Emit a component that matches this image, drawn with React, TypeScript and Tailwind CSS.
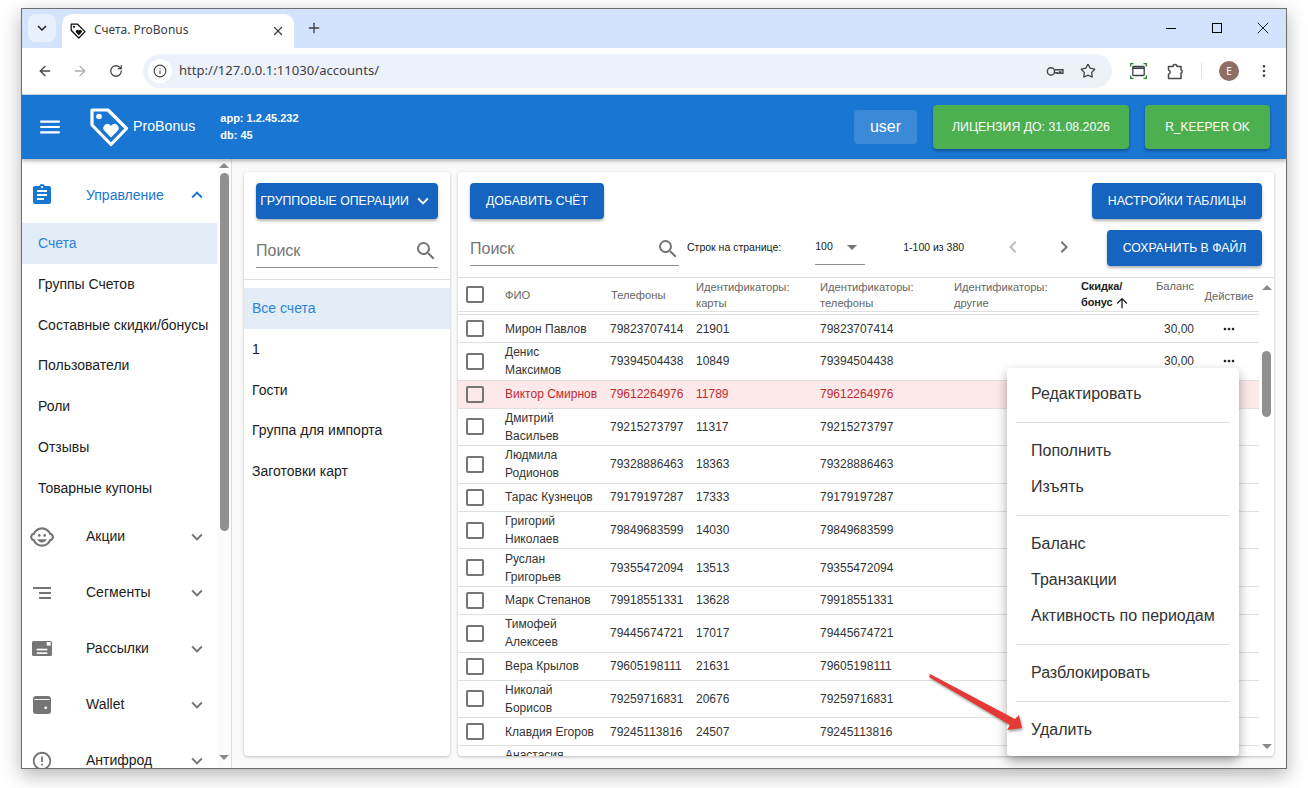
import { ArrowLeft, ArrowRight, Info, MoreVertical, Plus, RotateCw, Star, X } from "lucide-react";
import {
  MdArrowDropDown,
  MdArrowUpward,
  MdAssignment,
  MdChevronLeft,
  MdChevronRight,
  MdChildCare,
  MdErrorOutline,
  MdExpandLess,
  MdExpandMore,
  MdKeyboardArrowDown,
  MdMenu,
  MdMoreHoriz,
  MdSearch,
} from "react-icons/md";

const tableCols = "grid grid-cols-[47px_106px_85px_124px_134px_127px_63px_50px_65px]";

const subItems = ["Счета", "Группы Счетов", "Составные скидки/бонусы", "Пользователи", "Роли", "Отзывы", "Товарные купоны"];
const groups = ["Все счета", "1", "Гости", "Группа для импорта", "Заготовки карт"];

type Row = { name: string; phone: string; card: string; balance?: string; blocked?: boolean };

const rows: Row[] = [
  { name: "Мирон Павлов", phone: "79823707414", card: "21901", balance: "30,00" },
  { name: "Денис\nМаксимов", phone: "79394504438", card: "10849", balance: "30,00" },
  { name: "Виктор Смирнов", phone: "79612264976", card: "11789", blocked: true },
  { name: "Дмитрий\nВасильев", phone: "79215273797", card: "11317" },
  { name: "Людмила\nРодионов", phone: "79328886463", card: "18363" },
  { name: "Тарас Кузнецов", phone: "79179197287", card: "17333" },
  { name: "Григорий\nНиколаев", phone: "79849683599", card: "14030" },
  { name: "Руслан\nГригорьев", phone: "79355472094", card: "13513" },
  { name: "Марк Степанов", phone: "79918551331", card: "13628" },
  { name: "Тимофей\nАлексеев", phone: "79445674721", card: "17017" },
  { name: "Вера Крылов", phone: "79605198111", card: "21631" },
  { name: "Николай\nБорисов", phone: "79259716831", card: "20676" },
  { name: "Клавдия Егоров", phone: "79245113816", card: "24507" },
  { name: "Анастасия\nПетрова", phone: "79245113817", card: "24508" },
];

const menuGroups = [
  ["Редактировать"],
  ["Пополнить", "Изъять"],
  ["Баланс", "Транзакции", "Активность по периодам"],
  ["Разблокировать"],
  ["Удалить"],
];

function TagLogo({ className }: { className?: string }) {
  return (
    <svg viewBox="0 0 40 40" className={className} fill="none">
      <path d="M3 3 L19 3 L37.5 21.5 L22 37.5 L3 18 Z" stroke="currentColor" strokeWidth="3.2" strokeLinejoin="round" />
      <circle cx="10" cy="9.5" r="2.8" fill="currentColor" />
      <path d="M22 30.5 L15.6 24.1 a4.1 4.1 0 0 1 5.8-5.8 L22 19 l.6-.7 a4.1 4.1 0 0 1 5.8 5.8 Z" fill="currentColor" />
    </svg>
  );
}

function MailIcon({ className }: { className?: string }) {
  return (
    <svg viewBox="0 0 20 15" className={className} fill="currentColor">
      <rect width="20" height="15" rx="1.5" />
      <rect x="14.7" y="1" width="4" height="3.6" fill="#fff" />
      <rect x="4.7" y="7.7" width="10.7" height="1.7" fill="#fff" />
      <rect x="4.7" y="11.3" width="10.7" height="1.6" fill="#fff" />
    </svg>
  );
}

function WalletIcon({ className }: { className?: string }) {
  return (
    <svg viewBox="0 0 18 18" className={className} fill="currentColor">
      <rect width="18" height="18" rx="3" />
      <rect x="1.4" y="3.1" width="15.2" height="0.9" fill="#fff" />
      <circle cx="12.7" cy="11.8" r="1.4" fill="#fff" />
    </svg>
  );
}

function SegmentsIcon({ className }: { className?: string }) {
  return (
    <svg viewBox="0 0 18 12" className={className} fill="currentColor">
      <rect x="0" y="0" width="18" height="2" />
      <rect x="6" y="5" width="12" height="2" />
      <rect x="6" y="10" width="12" height="2" />
    </svg>
  );
}

function KeyIcon({ className }: { className?: string }) {
  return (
    <svg viewBox="0 0 20 12" className={className} fill="none" stroke="currentColor" strokeWidth="1.6">
      <circle cx="5.5" cy="6" r="4" />
      <path d="M9.5 4.2h9.3v4h-2.2V6.6h-1.8v1.6h-2.4V7.6H9.5" />
    </svg>
  );
}

function CaptureIcon({ className }: { className?: string }) {
  return (
    <svg viewBox="0 0 17 16" className={className} fill="none" strokeWidth="1.3">
      <path d="M.7 3.5V.7h2.8M13.5.7h2.8v2.8M.7 12.5v2.8h2.8M13.5 15.3h2.8v-2.8" stroke="#2e7d32" />
      <rect x="2.8" y="3.5" width="11.4" height="9" rx="0.8" stroke="#3c4043" />
      <path d="M2.8 5.2h11.4" stroke="#3c4043" strokeWidth="1.6" />
    </svg>
  );
}

function PuzzleIcon({ className }: { className?: string }) {
  return (
    <svg viewBox="0 0 17 17" className={className} fill="none" stroke="currentColor" strokeWidth="1.5" strokeLinejoin="round">
      <path d="M1.5 3.5H6a2 2 0 0 1 4 0h4v3.4a1.7 1.7 0 0 1 0 3.2v5.4H1.5v-4.3a2.1 2.1 0 0 0 0-4.1z" />
    </svg>
  );
}

function Checkbox() {
  return <span className="block h-[17px] w-[18px] rounded-[2px] border-2 border-[#757575]" />;
}

function ScrollArrow({ down }: { down?: boolean }) {
  return (
    <span
      className={
        down
          ? "block h-0 w-0 border-x-[5px] border-t-[5px] border-x-transparent border-t-[#8a8a8a]"
          : "block h-0 w-0 border-x-[5px] border-b-[5px] border-x-transparent border-b-[#8a8a8a]"
      }
    />
  );
}

function PrimaryButton({ label, className }: { label: string; className?: string }) {
  return (
    <button className={`flex h-9 items-center justify-center whitespace-nowrap rounded bg-[#1565c0] text-[12.25px] font-medium text-white shadow-[0_2px_3px_rgba(0,0,0,0.3)] ${className ?? ""}`}>
      {label}
    </button>
  );
}

function NavGroup({ icon, label }: { icon: React.ReactNode; label: string }) {
  return (
    <div className="flex h-14 shrink-0 items-center text-[#757575]">
      <div className="flex w-10 justify-center">{icon}</div>
      <span className="mb-[1px] ml-[24px] flex-1 text-sm text-[#212121]">{label}</span>
      <MdExpandMore className="mr-[9px] text-[22px]" />
    </div>
  );
}

export default function App() {
  return (
    <div className="h-[788px] w-[1308px] overflow-hidden bg-white pl-[21px] pt-2 font-['Liberation_Sans',Arial,sans-serif]">
      <div className="flex h-[761px] w-[1266px] flex-col overflow-hidden border border-[#6e6e6e] shadow-[0_6px_18px_rgba(0,0,0,0.3)]">
        {/* browser tabs */}
        <div className="flex h-[39px] shrink-0 items-end bg-[#d3e3fd] font-['Noto_Sans',sans-serif]">
          <div className="mb-[6px] ml-[6px] flex h-7 w-7 items-center justify-center rounded-lg bg-[#e8f0fe]">
            <MdKeyboardArrowDown className="text-lg text-[#1f1f1f]" />
          </div>
          <div className="ml-[6px] flex h-[34px] w-[232px] items-center rounded-t-[10px] bg-white pl-2 pr-2">
            <TagLogo className="h-4 w-4 text-[#111]" />
            <span className="mb-[2px] ml-[8px] flex-1 text-xs text-[#3c4043]">Счета. ProBonus</span>
            <X size={14} strokeWidth={2.2} className="mb-[1px] mr-[1px] text-[#3c4043]" />
          </div>
          <div className="mb-[6px] ml-[6px] flex h-7 w-7 items-center justify-center">
            <Plus size={16} strokeWidth={2} className="text-[#3c4043]" />
          </div>
          <div className="mb-[10px] ml-auto flex items-center pr-[13px] text-[#111]">
            <span className="block h-px w-[10px] bg-black" />
            <span className="ml-[36px] block h-[10px] w-[10px] border border-black" />
            <X size={20} strokeWidth={1.1} className="ml-[31px]" />
          </div>
        </div>

        {/* browser toolbar */}
        <div className="flex h-[47px] shrink-0 items-center border-b border-[#d5dbe5] bg-white font-['Noto_Sans',sans-serif] text-[#474747]">
          <ArrowLeft size={16} className="ml-[15px]" />
          <ArrowRight size={16} className="ml-[19px] text-[#b0b0b0]" />
          <RotateCw size={14} strokeWidth={2.2} className="ml-[21px]" />
          <div className="ml-[20px] flex h-[34px] w-[969px] items-center rounded-full bg-[#edf2fa] pl-[5px] pr-[16px]">
            <span className="flex h-6 w-6 items-center justify-center rounded-full bg-white">
              <Info size={14} strokeWidth={2} />
            </span>
            <span className="ml-[7px] flex-1 text-[13.1px] text-[#3c4043]">http://127.0.0.1:11030/accounts/</span>
            <KeyIcon className="mr-[16px] w-[18px] text-[#474747]" />
            <Star size={16} strokeWidth={2} />
          </div>
          <CaptureIcon className="ml-[18px] w-[17px]" />
          <PuzzleIcon className="ml-[20px] w-[17px]" />
          <span className="ml-[17px] h-[16px] w-px bg-[#d3e3fd]" />
          <span className="ml-[17px] flex h-5 w-5 items-center justify-center rounded-full bg-[#8d6e63] text-[10px] text-white">E</span>
          <MoreVertical size={16} className="ml-[17px]" />
        </div>

        {/* app header */}
        <header className="relative z-10 flex h-16 shrink-0 items-center bg-[#1976d2] text-white shadow-[0_2px_4px_rgba(0,0,0,0.3)]">
          <MdMenu className="ml-[15px] text-[26px]" />
          <TagLogo className="ml-[26px] h-10 w-10" />
          <span className="ml-1 text-[14.2px]">ProBonus</span>
          <div className="ml-[25px] text-[11px] font-bold leading-[17px]">
            <div>app: 1.2.45.232</div>
            <div>db: 45</div>
          </div>
          <div className="ml-auto flex items-center pr-4">
            <span className="flex h-[34px] w-[63px] items-center justify-center rounded bg-white/15 text-base font-medium">user</span>
            <button className="ml-4 h-11 w-[196px] rounded bg-[#4caf50] text-[12.3px] font-medium shadow-[0_2px_3px_rgba(0,0,0,0.3)]">ЛИЦЕНЗИЯ ДО: 31.08.2026</button>
            <button className="ml-4 h-11 w-[125px] rounded bg-[#4caf50] text-xs font-medium shadow-[0_2px_3px_rgba(0,0,0,0.3)]">R_KEEPER OK</button>
          </div>
        </header>

        <div className="flex min-h-0 flex-1 bg-[#fafafa]">
          {/* sidebar */}
          <aside className="flex w-[210px] shrink-0 border-r border-[#dcdcdc] bg-white">
            <nav className="flex w-[195px] shrink-0 flex-col overflow-hidden pt-2">
              <div className="flex h-14 shrink-0 items-center text-[#1976d2]">
                <div className="flex w-10 justify-center">
                  <MdAssignment className="text-[24px]" />
                </div>
                <span className="ml-[24px] flex-1 text-sm">Управление</span>
                <MdExpandLess className="mr-[9px] text-[22px]" />
              </div>
              {subItems.map((item, i) => (
                <div
                  key={item}
                  className={
                    i === 0
                      ? "flex h-[41px] shrink-0 items-center bg-[#e3edf7] pb-[2px] pl-4 text-sm text-[#2b84dc]"
                      : "flex h-[40.8px] shrink-0 items-center whitespace-nowrap pb-[1px] pl-4 text-sm text-[#212121]"
                  }
                >
                  {item}
                </div>
              ))}
              <NavGroup icon={<MdChildCare className="text-[26px]" />} label="Акции" />
              <NavGroup icon={<SegmentsIcon className="w-[18px]" />} label="Сегменты" />
              <NavGroup icon={<MailIcon className="w-5" />} label="Рассылки" />
              <NavGroup icon={<WalletIcon className="w-[18px]" />} label="Wallet" />
              <NavGroup icon={<MdErrorOutline className="text-[22px]" />} label="Антифрод" />
            </nav>
            <div className="flex w-[14px] flex-col items-center bg-[#fbfbfb] pb-[8px] pt-[4px]">
              <ScrollArrow />
              <div className="mt-[5px] h-[358px] w-[9px] rounded-full bg-[#909090]" />
              <div className="mt-auto">
                <ScrollArrow down />
              </div>
            </div>
          </aside>

          <main className="flex min-w-0 flex-1 gap-2 pb-3 pl-3 pr-3 pt-[13px]">
            {/* groups panel */}
            <section className="w-[206px] shrink-0 rounded bg-white shadow-[0_1px_3px_rgba(0,0,0,0.25)]">
              <div className="px-3 pt-[11px]">
                <button className="flex h-9 w-full items-center justify-center gap-[3px] whitespace-nowrap rounded bg-[#1565c0] text-[12.25px] font-medium text-white shadow-[0_2px_3px_rgba(0,0,0,0.3)]">
                  ГРУППОВЫЕ ОПЕРАЦИИ
                  <MdExpandMore className="text-[22px]" />
                </button>
                <div className="mt-[13px] flex h-[36px] items-center justify-between border-b border-[#8f8f8f] pt-[2px] text-base text-[#757575]">
                  <span>Поиск</span>
                  <MdSearch className="text-[24px]" />
                </div>
              </div>
              <div className="mt-[11px] border-t border-[#e0e0e0] pt-2">
                {groups.map((group, i) => (
                  <div
                    key={group}
                    className={
                      i === 0
                        ? "flex h-[41px] items-center bg-[#e3edf7] pb-[2px] pl-2 text-sm text-[#2b84dc]"
                        : "flex h-[40.6px] items-center pl-2 text-sm text-[#212121]"
                    }
                  >
                    {group}
                  </div>
                ))}
              </div>
            </section>

            {/* accounts table panel */}
            <section className="flex min-w-0 flex-1 flex-col overflow-hidden rounded bg-white shadow-[0_1px_3px_rgba(0,0,0,0.25)]">
              <div className="flex justify-between px-3 pt-[11px]">
                <PrimaryButton label="ДОБАВИТЬ СЧЁТ" className="w-[134px]" />
                <PrimaryButton label="НАСТРОЙКИ ТАБЛИЦЫ" className="w-[170px]" />
              </div>
              <div className="flex items-start pl-3 pr-3 pt-[11px]">
                <div className="flex h-[36px] w-[209px] items-center justify-between border-b border-[#8f8f8f] pt-[3px] text-base text-[#757575]">
                  <span>Поиск</span>
                  <MdSearch className="mr-[-1px] text-[24px]" />
                </div>
                <span className="ml-2 mt-[10px] whitespace-nowrap text-[10.5px] text-[#212121]">Строк на странице:</span>
                <div className="ml-[34px] flex h-[35px] w-[50px] items-center justify-between border-b border-[#8f8f8f] pr-[1px] text-[10.5px] text-[#212121]">
                  <span>100</span>
                  <MdArrowDropDown className="text-[24px] text-[#757575]" />
                </div>
                <span className="ml-[38px] mt-[10px] whitespace-nowrap text-[10.5px] text-[#212121]">1-100 из 380</span>
                <MdChevronLeft className="ml-[37px] mt-[5px] text-[24px] text-[#bdbdbd]" />
                <MdChevronRight className="ml-[27px] mt-[5px] text-[24px] text-[#757575]" />
                <PrimaryButton label="СОХРАНИТЬ В ФАЙЛ" className="ml-auto w-[155px]" />
              </div>

              <div className="mt-[11px] flex min-h-0 flex-1 border-t border-[#e0e0e0]">
                <div className="w-[801px] shrink-0 overflow-hidden">
                  <div className={`${tableCols} h-[34px] border-b border-[#e0e0e0] pb-[2px] text-[11.2px] font-medium leading-4 text-[#666666]`}>
                    <div className="flex items-center pl-[8px]">
                      <Checkbox />
                    </div>
                    <div className="flex items-center">ФИО</div>
                    <div className="flex items-center">Телефоны</div>
                    <div className="flex items-center">Идентификаторы: карты</div>
                    <div className="flex items-center">Идентификаторы: телефоны</div>
                    <div className="flex items-center">Идентификаторы: другие</div>
                    <div className="flex items-center text-[11px] font-bold tracking-[-0.1px] text-[#212121]">
                      <span>
                        Скидка/ бонус
                        <MdArrowUpward className="ml-[1px] inline text-[16px]" />
                      </span>
                    </div>
                    <div className="text-right">Баланс</div>
                    <div className="flex items-center justify-center whitespace-nowrap pl-[5px] pt-[2px]">Действие</div>
                  </div>
                  <div className="mt-[2px] border-t border-[#e0e0e0]">
                    {rows.map((row) => (
                      <div
                        key={row.phone}
                        className={`${tableCols} items-center border-b border-[#e0e0e0] text-xs leading-[18px] ${row.blocked ? "bg-[#fde8ea] text-[#bf2a30]" : "text-[#333333]"}`}
                      >
                        <div className="flex items-center pl-[8px]">
                          <Checkbox />
                        </div>
                        <div className={row.name.includes("\n") ? "whitespace-pre-line py-[0.3px]" : "whitespace-nowrap py-[4.5px]"}>{row.name}</div>
                        <div className="-ml-px">{row.phone}</div>
                        <div>{row.card}</div>
                        <div>{row.phone}</div>
                        <div />
                        <div />
                        <div className="text-right">{row.balance}</div>
                        <div className="flex justify-center pl-[5px]">
                          {row.balance && <MdMoreHoriz className="text-[16px] text-[#212121]" />}
                        </div>
                      </div>
                    ))}
                  </div>
                </div>
                <div className="flex w-[15px] flex-col items-center pb-[7px] pt-[7px]">
                  <ScrollArrow />
                  <div className="mt-[61px] h-[66px] w-[9px] rounded-full bg-[#909090]" />
                  <div className="mt-auto">
                    <ScrollArrow down />
                  </div>
                </div>
              </div>
            </section>
          </main>
        </div>
      </div>

      {/* row actions menu */}
      <div className="absolute left-[1007px] top-[368px] h-[388px] w-[232px] rounded bg-white shadow-[0_5px_12px_rgba(0,0,0,0.35)]">
        {menuGroups.map((group, i) => (
          <div key={group[0]} className={i === 0 ? "mx-[9px] pb-[10px] pt-[8px]" : "mx-[9px] border-t border-[#e0e0e0] pb-[10px] pt-[10px]"}>
            {group.map((item) => (
              <div key={item} className="flex h-9 items-center whitespace-nowrap pl-[15px] text-base text-[#333333]">
                {item}
              </div>
            ))}
          </div>
        ))}
      </div>

      {/* annotation arrow */}
      <svg className="absolute left-[925px] top-[670px] h-[70px] w-[105px]" viewBox="0 0 105 70">
        <path d="M5 4 L90 49 L94 45 L97 58 L82 60 L85 55 L4 7 Z" fill="#e53935" style={{ filter: "drop-shadow(1px 2px 1px rgba(0,0,0,0.35))" }} />
      </svg>
    </div>
  );
}
